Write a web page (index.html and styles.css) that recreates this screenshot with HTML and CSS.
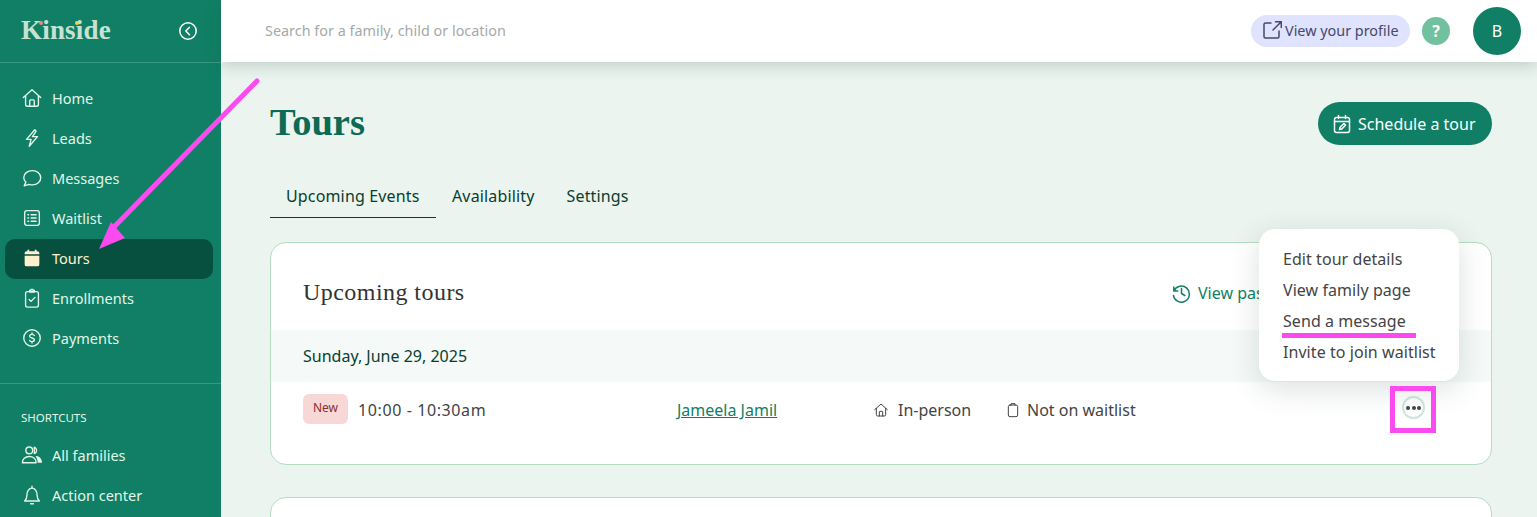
FILE: index.html
```html
<!DOCTYPE html>
<html lang="en">
<head>
  <meta charset="UTF-8">
  <meta name="viewport" content="width=device-width, initial-scale=1.0">
  <title>Tours</title>
  <link rel="stylesheet" href="styles.css">
</head>
<body>

  <aside class="sidebar">
    <div class="brand">
      <span class="logo">Kinside<i class="dot dot-coral"></i><i class="dot dot-yellow"></i></span>
      <svg class="collapse" viewBox="0 0 20 20" width="20" height="20"><circle cx="10" cy="10" r="8.2"/><path d="M11.5 6.2 7.8 10l3.7 3.8"/></svg>
    </div>
    <nav class="nav">
      <a class="nav-item"><svg viewBox="0 0 24 24"><path d="M2.5 11.5 12 3l9.500 8.500M5 9.500V19a2 2 0 0 0 2 2h10a2 2 0 0 0 2-2V9.500M9.500 21v-6a1 1 0 0 1 1-1h3a1 1 0 0 1 1 1v6"/></svg>Home</a>
      <a class="nav-item"><svg viewBox="0 0 24 24"><path d="M15 3 6 13.500h5L9 21l9-10.500h-5.500L16.500 4.500z"/></svg>Leads</a>
      <a class="nav-item"><svg viewBox="0 0 24 24"><path d="M12.500 4C7 4 3 7.300 3 11.500c0 2 .9 3.700 2.300 5L3.500 20.500l5-1.600c1.200.4 2.600.6 4 .6 5.300 0 9-3.400 9-7.800S17.800 4 12.500 4z"/></svg>Messages</a>
      <a class="nav-item"><svg viewBox="0 0 24 24"><rect x="4" y="4" width="16" height="16" rx="2.500"/><path d="M11 8.500h5.500M11 12h5.500M11 15.500h5.500M7.500 8.500h.8M7.500 12h.8M7.500 15.500h.8"/></svg>Waitlist</a>
      <a class="nav-item active"><svg viewBox="0 0 24 24" class="solid"><path d="M4 9.500h16V19a2 2 0 0 1-2 2H6a2 2 0 0 1-2-2zM4 8V6.500a2 2 0 0 1 2-2h1V3h2v1.500h6V3h2v1.500h1a2 2 0 0 1 2 2V8z"/></svg>Tours</a>
      <a class="nav-item"><svg viewBox="0 0 24 24"><rect x="5" y="5" width="14" height="17" rx="2"/><path d="M9.500 5V3.500h1.500a1 1 0 0 1 2 0h1.500V5.500h-5zM8.800 13.500l2.200 2.200 4.200-4.400"/></svg>Enrollments</a>
      <a class="nav-item"><svg viewBox="0 0 24 24"><circle cx="12" cy="12" r="9"/><path d="M14.500 9.300c-.4-.9-1.300-1.300-2.500-1.300-1.500 0-2.600.8-2.600 2s1 1.700 2.600 2c1.600.3 2.600.8 2.600 2s-1.100 2-2.600 2c-1.200 0-2.100-.4-2.500-1.300M12 6.500V8M12 16v1.500"/></svg>Payments</a>
    </nav>
    <div class="shortcuts">
      <div class="shortcuts-label">SHORTCUTS</div>
      <a class="nav-item"><svg viewBox="0 0 24 24"><circle cx="9" cy="7" r="3.700"/><path d="M14.500 3.500a3.700 3.700 0 0 1 0 7zM1.500 20.500c0-4 3-6.800 7.500-6.800s7.500 2.800 7.500 6.800z"/><path class="fill" d="M16 13c4 0 6.800 2.800 7 7.500h-4.800c0-2.800-.9-5-2.200-7.500z"/></svg>All families</a>
      <a class="nav-item"><svg viewBox="0 0 24 24"><path d="M4 18.500h16c-1.500-1.500-2.500-3-2.500-6.500 0-4-2.300-7.500-5.500-7.500S6.500 8 6.500 12c0 3.500-1 5-2.500 6.500zM12 2.500v2M10.500 21.500h3"/></svg>Action center</a>
    </div>
  </aside>

  <div class="page">
    <header class="topbar">
      <span class="search">Search for a family, child or location</span>
      <a class="profile-pill"><svg viewBox="0 0 20 20" width="20" height="20"><path d="M9 3H3.500A1.500 1.500 0 0 0 2 4.500v12A1.500 1.500 0 0 0 3.500 18h12a1.500 1.500 0 0 0 1.500-1.500V11M11 10l8-8M13.500 1.700h5.800v5.800"/></svg>View your profile</a>
      <span class="help">?</span>
      <span class="avatar">B</span>
    </header>

    <main class="content">
      <div class="title-row">
        <h1>Tours</h1>
        <button class="schedule-btn"><svg viewBox="0 0 20 20" width="20" height="20"><rect x="2.500" y="3.500" width="15" height="15" rx="2"/><path d="M2.500 7.500h15M6.500 1.500v3M13.500 1.500v3M7.500 15.500l.6-2.300 3.800-3.700 1.700 1.700-3.800 3.700z"/></svg>Schedule a tour</button>
      </div>

      <div class="tabs">
        <a class="tab current">Upcoming Events</a>
        <a class="tab">Availability</a>
        <a class="tab">Settings</a>
      </div>

      <section class="card">
        <div class="card-head">
          <h2>Upcoming tours</h2>
          <a class="past-link"><svg viewBox="0 0 20 20" width="20" height="20"><path d="M2.800 4v4h4M3 8a8 8 0 1 1-.5 4.500M10.500 5.500V10.500l3.300 2"/></svg>View past tours</a>
        </div>
        <div class="date-band">Sunday, June 29, 2025</div>
        <div class="tour-row">
          <div class="tour-time"><span class="badge">New</span>10:00 - 10:30am</div>
          <div><a class="family-link">Jameela Jamil</a></div>
          <div class="meta"><svg viewBox="0 0 24 24" width="16" height="16"><path d="M2.500 11.500 12 3l9.500 8.500M5 9.500V19a2 2 0 0 0 2 2h10a2 2 0 0 0 2-2V9.500M9.500 21v-6a1 1 0 0 1 1-1h3a1 1 0 0 1 1 1v6"/></svg>In-person</div>
          <div class="meta meta-wide"><svg viewBox="0 0 24 24" width="16" height="16"><rect x="5" y="4.500" width="14" height="17.500" rx="2.500"/><path d="M9 5V2.500h6V5"/></svg>Not on waitlist</div>
          <span class="more"><i></i><i></i><i></i></span>
        </div>

        <ul class="menu">
          <li>Edit tour details</li>
          <li>View family page</li>
          <li>Send a message</li>
          <li>Invite to join waitlist</li>
        </ul>
      </section>

      <section class="card card-next"></section>
    </main>
  </div>

  <!-- annotations drawn on top of the screenshot -->
  <svg class="arrow" viewBox="0 0 1537 517" width="1537" height="517">
    <path d="M257 81 112 229" stroke="#fb4bf0" stroke-width="5" fill="none"/>
    <path d="M99 249 125 238 111 222z" fill="#fb4bf0"/>
  </svg>
  <span class="mark-line"></span>
  <span class="mark-box"></span>

</body>
</html>
```

FILE: styles.css
```css
* {
  box-sizing: border-box;
}
body {
  font-family: "Noto Sans", Arial, sans-serif;
  margin: 0;
  height: 100vh;
  overflow: hidden;
  display: flex;
  background-color: #ebf4ef;
  color: #444;
}
svg {
  fill: none;
  stroke: currentColor;
  stroke-width: 1.5;
  stroke-linecap: round;
  stroke-linejoin: round;
  flex-shrink: 0;
}

/* sidebar */
.sidebar {
  width: 221px;
  flex-shrink: 0;
  background-color: #107f65;
  color: #e3f6e8;
  font-size: 14.5px;
}
.brand {
  height: 63px;
  display: flex;
  align-items: center;
  justify-content: space-between;
  padding: 0 23px 1px 21px;
  border-bottom: 1px solid #3a9880;
}
.logo {
  position: relative;
  font-family: "Liberation Serif", serif;
  font-size: 27px;
  font-weight: bold;
  color: #c8e2d1;
  letter-spacing: 0.2px;
}
.dot {
  position: absolute;
  width: 4px;
  height: 4px;
  border-radius: 50%;
  top: 6px;
}
.dot-coral {
  left: 18px;
  background-color: #e58a7c;
}
.dot-yellow {
  left: 54px;
  background-color: #f7cf55;
}
.collapse {
  color: #fff;
}
.nav {
  padding: 16px 8px 24px 5px;
  border-bottom: 1px solid #3a9880;
}
.nav-item {
  height: 40px;
  display: flex;
  align-items: center;
  gap: 9px;
  padding-left: 16px;
  padding-bottom: 2px;
  border-radius: 10px;
}
.nav-item svg {
  width: 22px;
  height: 22px;
}
.nav-item svg .fill {
  fill: currentColor;
  stroke: none;
}
.nav-item.active {
  background-color: #07503f;
  color: #fff0cf;
}
.nav-item svg.solid {
  fill: currentColor;
  stroke: none;
}
.shortcuts {
  padding: 26px 8px 0 5px;
}
.shortcuts-label {
  font-size: 11.5px;
  padding-left: 16px;
  height: 16px;
  line-height: 16px;
  margin-bottom: 10px;
}

/* top bar */
.page {
  flex: 1;
  min-width: 0;
}
.topbar {
  position: relative;
  height: 62px;
  background-color: white;
  display: flex;
  align-items: center;
  padding: 0 16px 0 44px;
  box-shadow: 0 4px 14px rgba(40, 80, 65, 0.22);
}
.search {
  flex: 1;
  font-size: 14.4px;
  padding-bottom: 2px;
  color: #a5aaa7;
}
.profile-pill {
  display: flex;
  align-items: center;
  gap: 3px;
  height: 32px;
  padding: 0 0 2px 11px;
  width: 159px;
  border-radius: 16px;
  background-color: #e0e3fd;
  color: #45486a;
  font-size: 14.4px;
  white-space: nowrap;
}
.help {
  width: 28px;
  height: 28px;
  margin-left: 12px;
  border-radius: 50%;
  background-color: #72c19e;
  color: white;
  font-weight: bold;
  font-size: 16px;
  display: flex;
  align-items: center;
  justify-content: center;
}
.avatar {
  width: 48px;
  height: 48px;
  margin-left: 23px;
  border-radius: 50%;
  background-color: #107f65;
  color: white;
  font-size: 16px;
  display: flex;
  align-items: center;
  justify-content: center;
}

/* content */
.content {
  padding: 40px 45px 0 49px;
}
.title-row {
  display: flex;
  align-items: center;
  justify-content: space-between;
  height: 43px;
}
h1 {
  margin: -4px 0 0;
  font-family: "Liberation Serif", serif;
  font-size: 38.5px;
  color: #0c6a55;
}
.schedule-btn {
  display: flex;
  align-items: center;
  gap: 6px;
  height: 43px;
  width: 174px;
  padding: 0 0 0 14px;
  border: none;
  border-radius: 22px;
  background-color: #107f65;
  color: white;
  font-family: inherit;
  font-size: 16px;
  white-space: nowrap;
}
.tabs {
  display: flex;
  margin-top: 30px;
  height: 43px;
  color: #07402f;
  font-size: 16px;
  letter-spacing: 0.15px;
}
.tab {
  padding: 10px 16px 0;
}
.tab.current {
  width: 166px;
  border-bottom: 1px solid #07402f;
}
.card {
  position: relative;
  margin-top: 24px;
  height: 223px;
  background-color: white;
  border: 1px solid #b5dcc5;
  border-radius: 16px;
}
.card-next {
  margin-top: 32px;
}
.card-head {
  height: 87px;
  display: flex;
  align-items: center;
  padding: 12px 0 0 32px;
}
h2 {
  width: 868px;
  margin: 0;
  font-family: "Liberation Serif", serif;
  font-size: 24px;
  font-weight: normal;
  letter-spacing: 0.45px;
  color: #333;
}
.past-link {
  display: flex;
  align-items: center;
  gap: 7px;
  color: #107f65;
  font-size: 16px;
  white-space: nowrap;
}
.date-band {
  height: 52px;
  line-height: 52px;
  padding-left: 32px;
  background-color: #f5f9f7;
  color: #07402f;
  font-size: 16px;
}
.tour-row {
  display: grid;
  grid-template-columns: 374px 196px 132px 1fr 23px;
  align-items: center;
  margin: 13px 66px 0 32px;
  height: 30px;
  font-size: 16px;
}
.tour-time {
  display: flex;
  align-items: center;
  gap: 10px;
  letter-spacing: 0.6px;
}
.badge {
  width: 45px;
  height: 30px;
  margin-top: -2px;
  line-height: 28px;
  text-align: center;
  letter-spacing: 0;
  border-radius: 6px;
  background-color: #f8d8d7;
  color: #8c2f2b;
  font-size: 12px;
}
.family-link {
  color: #107f65;
  text-decoration: underline;
}
.meta {
  display: flex;
  align-items: center;
  gap: 9px;
}
.meta-wide {
  gap: 6px;
}
.more {
  width: 23px;
  height: 23px;
  margin-top: -5px;
  border: 2px solid #cfe6d9;
  border-radius: 50%;
  display: flex;
  align-items: center;
  justify-content: center;
  gap: 1.500px;
}
.more i {
  width: 4px;
  height: 4px;
  border-radius: 50%;
  background-color: #444;
}
.menu {
  position: absolute;
  top: -14px;
  left: 988px;
  width: 200px;
  height: 152px;
  margin: 0;
  padding: 15px 24px;
  list-style: none;
  background-color: white;
  border-radius: 16px;
  box-shadow: 0 8px 30px rgba(30, 70, 55, 0.16);
  font-size: 16px;
  letter-spacing: 0.06px;
  white-space: nowrap;
}
.menu li {
  height: 31px;
  line-height: 31px;
}

/* annotations */
.arrow {
  position: absolute;
  left: 0;
  top: 0;
  stroke: none;
  pointer-events: none;
}
.mark-line {
  position: absolute;
  left: 1282px;
  top: 333px;
  width: 134px;
  height: 5px;
  background-color: #fb4bf0;
}
.mark-box {
  position: absolute;
  left: 1390px;
  top: 386px;
  width: 46px;
  height: 47px;
  border: 5px solid #fb4bf0;
}
```
